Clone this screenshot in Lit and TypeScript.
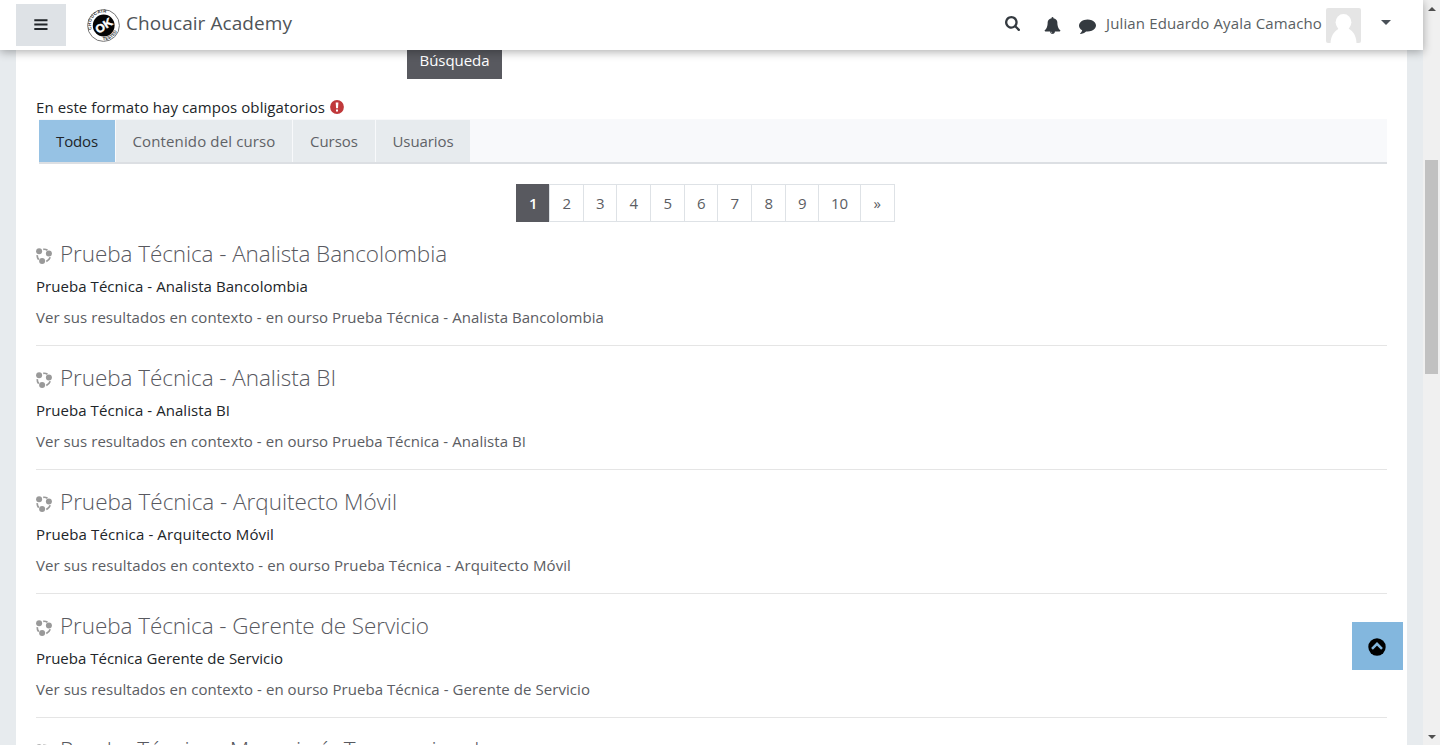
import { LitElement, html, css, svg } from "lit";
import { customElement } from "lit/decorators.js";

interface Result { title: string; summary: string; course: string; w: number[]; }

const results: Result[] = [
  { title: "Prueba Técnica - Analista Bancolombia", summary: "Prueba Técnica - Analista Bancolombia", course: "Prueba Técnica - Analista Bancolombia", w: [387, 272, 568] },
  { title: "Prueba Técnica - Analista BI", summary: "Prueba Técnica - Analista BI", course: "Prueba Técnica - Analista BI", w: [276, 194, 490] },
  { title: "Prueba Técnica - Arquitecto Móvil", summary: "Prueba Técnica - Arquitecto Móvil", course: "Prueba Técnica - Arquitecto Móvil", w: [337, 238, 535] },
  { title: "Prueba Técnica - Gerente de Servicio", summary: "Prueba Técnica Gerente de Servicio", course: "Prueba Técnica - Gerente de Servicio", w: [369, 247, 554] },
  { title: "Prueba Técnica - Mensajería Transaccional", summary: "", course: "", w: [419, 0, 0] },
];
const tabs: [string, number, number][] = [["Todos", 76, 42], ["Contenido del curso", 176, 143], ["Cursos", 82, 48], ["Usuarios", 94, 61]];
const pages: [string, number][] = [["1", 33], ["2", 34], ["3", 33], ["4", 34], ["5", 34], ["6", 33], ["7", 34], ["8", 34], ["9", 33], ["10", 42], ["»", 34]];

const fa = (path: string, size: number, box: string, cls = "") => html`<svg class=${cls} width=${size} height=${size} viewBox=${box}>${svg`<path d=${path} fill="currentColor"/>`}</svg>`;

@customElement("app-root")
export class AppRoot extends LitElement {
  static styles = css`
    :host { display: flex; height: 745px; overflow: hidden; background: #e7ebee; color: #212529; font: 15px/22px "Open Sans", "Noto Sans", sans-serif; }
    * { box-sizing: border-box; }
    svg { display: block; flex: none; }
    .page { flex: 1; min-width: 0; display: flex; flex-direction: column; }
    .fit { display: inline-block; white-space: pre; }
    header { position: relative; z-index: 2; flex: none; height: 50px; display: flex; align-items: flex-start; background: #fff; color: #343a40; box-shadow: 0 2px 9px rgba(0,0,0,.32); }
    .menu { width: 50px; height: 42px; margin: 4px 0 0 16px; background: #dee2e6; display: grid; place-items: center; }
    .logo { margin: 9px 0 0 21px; overflow: visible; }
    .brand { margin: 10px 0 0 6px; font-size: 19px; line-height: 27px; color: #505458; }
    .tools { margin-left: auto; display: flex; align-items: flex-start; }
    .search { margin: 16px 24px 0 0; }
    .bell { margin: 17px 18px 0 0; }
    .chat { margin: 17px 10px 0 0; }
    .user { margin: 12px 4px 0 0; color: #5a5f63; }
    .avatar { margin-top: 8px; border-radius: 2px; }
    .caret { margin: 20px 32px 0 20px; border: 5px solid transparent; border-top-color: #495057; border-bottom: 0; }
    main { flex: 1; min-height: 0; overflow: hidden; margin: 0 16px; padding: 0 20px; background: #fff; }
    .submit { display: flex; justify-content: center; width: 95px; height: 38px; margin: -9px 0 0 371px; padding-top: 8px; background: #58595f; color: #fff; }
    .notice { display: flex; align-items: center; height: 22px; margin: 17px 0 1px; gap: 5px; }
    .tabs { display: flex; height: 45px; margin-left: 3px; padding-top: 1px; background: #f8f9fb; border-bottom: 2px solid #dcdfe3; }
    .tab { height: 42px; margin-right: 1px; display: flex; align-items: center; justify-content: center; background: #e7ebee; color: #5f6267; }
    .tab.on { background: #96c2e4; color: #212529; }
    .pages { display: flex; width: 379px; height: 38px; margin: 20px auto 0 480px; border: 1px solid #dee2e6; border-left: 0; }
    .num { border-left: 1px solid #dee2e6; display: flex; align-items: center; justify-content: center; color: #5b5d63; }
    .num.on { background: #58595f; color: #fff; margin: -1px 0; border-color: #58595f; font-weight: 600; }
    .result { height: 124px; border-bottom: 1px solid #e5e5e5; }
    .title { display: flex; height: 48px; padding-top: 17px; color: #58595f; font-size: 22.5px; line-height: 30px; font-weight: 300; }
    .icon { margin: 9px 8px 0 0; }
    .summary { margin-top: 5px; height: 22px; }
    .context { margin-top: 9px; height: 22px; color: #5b5d63; }
    .bar { width: 17px; flex: none; display: flex; flex-direction: column; align-items: center; background: #f0f0f0; padding: 7px 0 6px; }
    .thumb { width: 13px; height: 214px; margin-top: 149px; background: #c1c1c1; }
    .up { border: 4px solid transparent; border-bottom-color: #505050; border-top: 0; }
    .down { margin-top: auto; border: 4px solid transparent; border-top-color: #505050; border-bottom: 0; }
    .totop { position: absolute; z-index: 3; left: 1352px; top: 622px; width: 51px; height: 48px; padding: 2px 1px 0 0; display: grid; place-items: center; background: #83b7de; color: #000; }
  `;

  firstUpdated() {
    // Spread the tracking so each label takes its intended width.
    for (const el of this.renderRoot.querySelectorAll<HTMLElement>(".fit")) {
      const gap = Number(el.dataset.w) - el.getBoundingClientRect().width;
      el.style.letterSpacing = `${gap / el.textContent!.length}px`;
    }
  }

  fit(text: string, w: number) {
    return html`<span class="fit" data-w=${w}>${text}</span>`;
  }

  courseIcon() {
    return html`<svg class="icon" width="16" height="16" viewBox="0 0 16 16"><g fill="none" stroke="#999" stroke-width="1.7"><path d="M7.200 1.300Q9.700 1 11.500 2.300M14.200 9.200Q13.300 11.800 10.300 13.500M1.300 7.200Q1 9.500 2.700 11.600"/></g><g fill="#999"><circle cx="3.100" cy="3.200" r="3"/><circle cx="12.900" cy="5.500" r="3"/><circle cx="6.100" cy="12.900" r="3"/></g></svg>`;
  }

  render() {
    return html`
      <div class="page">
        <header>
          <div class="menu"><svg width="14" height="14" viewBox="0 0 14 14"><path d="M.3 1.2h13.2v2H.3zM.3 5.6h13.2v2H.3zM.3 10h13.2v2H.3z" fill="#212529"/></svg></div>
          <svg class="logo" width="33" height="33" viewBox="0 0 33 33">
            <defs><path id="upper" d="M4.900 20.500A12.200 12.200 0 0 1 27 10.200"/><path id="lower" d="M14 30.900A14.700 14.700 0 0 0 31 14"/></defs>
            <circle cx="16.500" cy="16.500" r="15.900" fill="#fff" stroke="#777" stroke-width="1"/>
            <circle cx="16.700" cy="16.500" r="10.900" fill="#050505"/>
            <g font-family="Liberation Sans" font-weight="700" fill="#333"><text font-size="4.400"><textPath href="#upper" textLength="27">CHOUCAIR</textPath></text><text font-size="4.400"><textPath href="#lower" startOffset="2">TESTED</textPath></text></g>
            <text transform="translate(16.7 16.5) rotate(-33)" x="0" y="4.200" text-anchor="middle" textLength="18" lengthAdjust="spacingAndGlyphs" font-family="Liberation Sans" font-size="11.500" font-weight="700" fill="#fff" stroke="#fff" stroke-width=".4">OK</text>
          </svg>
          <div class="brand">${this.fit("Choucair Academy", 166)}</div>
          <div class="tools">
            ${fa("M1152 704q0-185-131.500-316.500t-316.500-131.500-316.500 131.500-131.500 316.500 131.500 316.500 316.500 131.500 316.500-131.500 131.500-316.500zm512 832q0 52-38 90t-90 38q-54 0-90-38l-343-342q-179 124-399 124-143 0-273.500-55.500t-225-150-150-225-55.500-273.500 55.500-273.500 150-225 225-150 273.500-55.500 273.500 55.500 225 150 150 225 55.500 273.500q0 220-124 399l343 343q37 37 37 90z", 15, "0 0 1664 1664", "search")}
            ${fa("M912 1696q0-16-16-16-59 0-101.500-42.500t-42.500-101.500q0-16-16-16t-16 16q0 73 51.500 124.500t124.500 51.500q16 0 16-16zm816-288q0 52-38 90t-90 38h-448q0 106-75 181t-181 75-181-75-75-181h-448q-52 0-90-38t-38-90q50-42 91-88t85-119.500 74.500-158.500 50-206 19.500-260q0-152 117-282.500t307-158.500q-8-19-8-39 0-40 28-68t68-28 68 28 28 68q0 20-8 39 190 28 307 158.500t117 282.500q0 139 19.500 260t50 206 74.500 158.500 85 119.500 91 88z", 17, "0 0 1792 1792", "bell")}
            ${fa("M1792 896q0 174-120 321.500t-326 233-450 85.500q-70 0-145-8-198 175-460 242-49 14-114 22-17 2-30.500-9t-17.500-29v-1q-3-4-.5-12t2-10 4.500-9.500l6-9 7-8.500 8-9q7-8 31-34.500t34.500-38 31-39.500 32.500-51 27-59 26-76q-157-89-247.500-220t-90.500-281q0-130 71-248.500t191-204.500 286-136.500 348-50.500q244 0 450 85.500t326 233 120 321.500z", 17, "0 0 1792 1792", "chat")}
            <div class="user">${this.fit("Julian Eduardo Ayala Camacho", 216)}</div>
            <svg class="avatar" width="35" height="35" viewBox="0 0 35 35"><path fill="#e5e5e5" d="M0 0h35v35H0z"/><ellipse cx="17.500" cy="14.300" rx="7.900" ry="8.300" fill="#fff"/><path d="M4.500 35C5 27.500 8 23.500 13 20.500h9.500c5 3 7.500 7 8 14.500z" fill="#fff"/></svg>
            <div class="caret"></div>
          </div>
        </header>
        <main>
          <div class="submit">${this.fit("Búsqueda", 70)}</div>
          <div class="notice">${this.fit("En este formato hay campos obligatorios", 289)}
            <svg width="14" height="14" viewBox="0 0 14 14"><circle cx="7" cy="7" r="6.900" fill="#c0393b"/><path d="M5.700 2.400h2.700L8 8.200H6.100zM6 9.400h2v2H6z" fill="#fff"/></svg>
          </div>
          <div class="tabs">${tabs.map(([t, w, f], i) => html`<div class="tab ${i ? "" : "on"}" style="width:${w}px">${this.fit(t, f)}</div>`)}</div>
          <div class="pages">${pages.map(([t, w], i) => html`<div class="num ${i ? "" : "on"}" style="width:${w}px">${this.fit(t, t === "10" ? 17 : 8.2)}</div>`)}</div>
          ${results.map(r => html`
            <section class="result">
              <div class="title">${this.courseIcon()}${this.fit(r.title, r.w[0])}</div>
              ${r.summary ? html`
                <div class="summary">${this.fit(r.summary, r.w[1])}</div>
                <div class="context">${this.fit("Ver sus resultados en contexto - en ourso " + r.course, r.w[2])}</div>` : ""}
            </section>`)}
        </main>
      </div>
      <div class="bar"><div class="up"></div><div class="thumb"></div><div class="down"></div></div>
      <div class="totop"><svg width="18" height="18" viewBox="0 0 18 18"><circle cx="9" cy="9" r="8.700" fill="#000"/><path d="M4 10.800 9 5.800l5 5" fill="none" stroke="#83b7de" stroke-width="2.500"/></svg></div>
    `;
  }
}
